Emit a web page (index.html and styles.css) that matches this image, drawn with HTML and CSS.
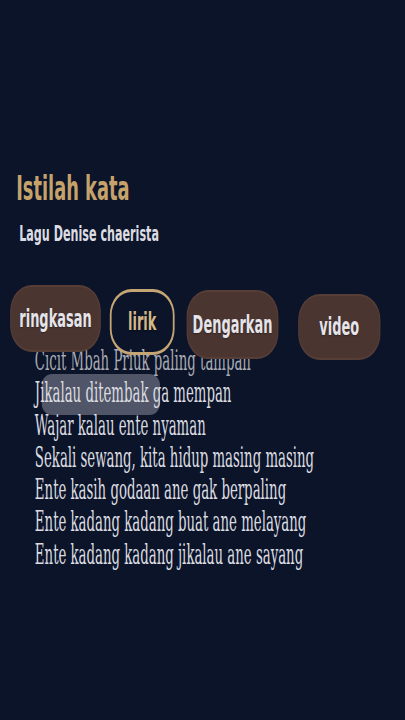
FILE: index.html
```html
<!DOCTYPE html>
<html lang="id">
<head>
<meta charset="utf-8">
<title>Istilah kata</title>
<link rel="stylesheet" href="styles.css">
</head>
<body>
<div class="frame">
  <div class="stage">
    <h1 class="title">Istilah kata</h1>
    <p class="subtitle">Lagu Denise chaerista</p>
    <div class="chips">
      <div class="chip chip-ringkasan">ringkasan</div>
      <div class="chip chip-lirik">lirik</div>
      <div class="chip chip-dengarkan">Dengarkan</div>
      <div class="chip chip-video">video</div>
    </div>
    <div class="lyrics">
      <p class="line line-dim">Cicit Mbah Priuk paling tampan</p>
      <p class="line"><span class="mark">Jikalau ditembak</span> ga mempan</p>
      <p class="line">Wajar kalau ente nyaman</p>
      <p class="line">Sekali sewang, kita hidup masing masing</p>
      <p class="line">Ente kasih godaan ane gak berpaling</p>
      <p class="line">Ente kadang kadang buat ane melayang</p>
      <p class="line">Ente kadang kadang jikalau ane sayang</p>
    </div>
  </div>
</div>
</body>
</html>
```
FILE: styles.css
```css
html, body {
  margin: 0;
  padding: 0;
  background: #0b1429;
  overflow: hidden;
}

.frame {
  width: 405px;
  height: 720px;
  overflow: hidden;
}

.stage {
  width: 675px;
  height: 720px;
  transform: scaleX(0.6);
  transform-origin: 0 0;
  padding-top: 169px;
  box-sizing: border-box;
}

.title {
  margin: 0 0 0 27px;
  font-family: "DejaVu Sans Condensed", "DejaVu Sans", sans-serif;
  font-weight: bold;
  font-size: 33px;
  line-height: 40px;
  color: #c6a26b;
}

.subtitle {
  margin: 13px 0 0 32px;
  font-family: "DejaVu Sans Condensed", "DejaVu Sans", sans-serif;
  font-weight: bold;
  font-size: 20.7px;
  line-height: 25px;
  color: #dcdce2;
}

.chips {
  position: relative;
  z-index: 1;
  display: flex;
  align-items: flex-start;
  margin-top: 38px;
  padding-left: 17px;
}

.chip {
  display: flex;
  align-items: center;
  justify-content: center;
  box-sizing: border-box;
  border-radius: 36px / 26px;
  background: #4b3530;
  border: 2px solid #563d36;
  font-family: "DejaVu Sans Condensed", "DejaVu Sans", sans-serif;
  font-weight: bold;
  font-size: 24px;
  color: #e4e4ea;
  text-shadow: 0 1px 2px rgba(0, 0, 0, 0.35);
}

.chip-ringkasan {
  width: 151px;
  height: 67px;
}

.chip-lirik {
  width: 108px;
  height: 66px;
  margin-top: 4px;
  margin-left: 15px;
  background: transparent;
  border: 3px solid #c6a574;
  color: #d4b887;
}

.chip-dengarkan {
  width: 153px;
  height: 69px;
  margin-top: 5px;
  margin-left: 20px;
}

.chip-video {
  width: 137px;
  height: 66px;
  margin-top: 9px;
  margin-left: 33px;
}

.lyrics {
  margin-top: -15px;
  padding-left: 66px;
  font-family: "DejaVu Serif Condensed", "DejaVu Serif", serif;
  font-size: 28px;
  line-height: 32.3px;
  color: #dcdce0;
  transform: scaleX(0.88);
  transform-origin: 0 0;
}

.line {
  margin: 0;
  white-space: nowrap;
}

.line-dim {
  color: #a9abb4;
}

.mark {
  position: relative;
}

.mark::before {
  content: "";
  position: absolute;
  left: 13px;
  right: -22px;
  top: -2px;
  bottom: -6px;
  border-radius: 20px / 11px;
  background: rgba(150, 150, 165, 0.5);
  z-index: -1;
}
```
